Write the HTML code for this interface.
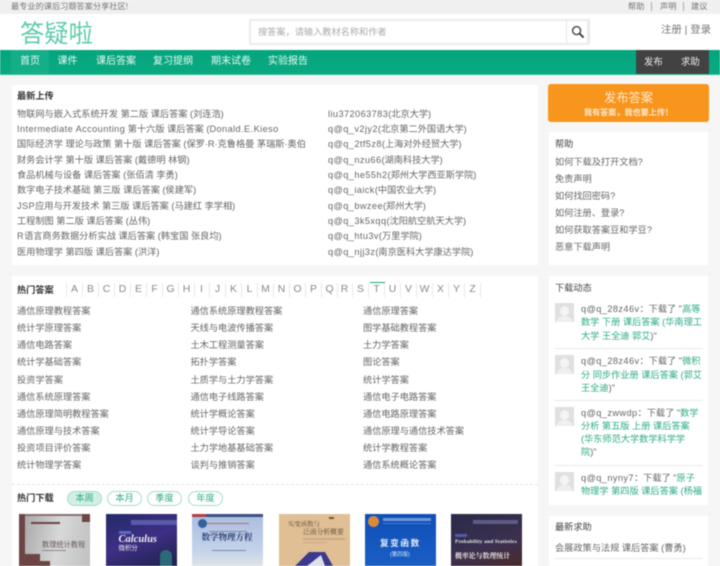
<!DOCTYPE html>
<html lang="zh"><head><meta charset="utf-8"><title>答疑啦</title>
<style>
html,body{margin:0;padding:0;width:720px;height:566px;overflow:hidden;background:#f6f6f6}
body{font-family:"Liberation Sans","Noto Sans CJK SC",sans-serif;font-size:9.2px;color:#666}
#w{position:absolute;left:0;top:0;width:720px;height:566px;overflow:hidden;filter:blur(.4px)}
#w div,#w span.a{position:absolute;white-space:nowrap}
.t{line-height:14px;height:14px}
.l{letter-spacing:.42px}
.b{color:#333;font-weight:bold}
.g{color:#2bab87}
.card{background:#fff}
.p{height:13px;top:491px;line-height:13px;border:1px solid #a5dcc9;border-radius:8px;color:#2bab87;text-align:center;font-size:9.2px;background:#fff}
.hr{height:1px;background:#eaeaea}
.av{width:19px;height:19px;background:#e0e0e0}
.av i{position:absolute;left:5px;top:3px;width:9px;height:10px;background:#f4f4f4;border-radius:50%}
.av b{position:absolute;left:2px;top:13px;width:15px;height:6px;background:#efefef;border-radius:6px 6px 0 0}
.L{top:283px;height:14px;line-height:14px;width:15px;text-align:center;font-size:10.4px;color:#888;border-right:1px solid #e8e8e8}
.bk{top:514px;height:52px;overflow:hidden}
</style></head><body><div id="w">

<div style="left:0;top:0;width:720px;height:14px;background:#f0f0f0"></div>
<div class="t" style="left:11px;top:0;font-size:8.2px;color:#777">最专业的课后习题答案分享社区!</div>
<div class="t" style="left:628px;top:0;font-size:8.2px;color:#777">帮助</div>
<div style="left:651px;top:2px;width:1px;height:9px;background:#aaa"></div>
<div class="t" style="left:660px;top:0;font-size:8.2px;color:#777">声明</div>
<div style="left:683px;top:2px;width:1px;height:9px;background:#aaa"></div>
<div class="t" style="left:691px;top:0;font-size:8.2px;color:#777">建议</div>

<div style="left:0;top:14px;width:720px;height:36px;background:#fff"></div>
<div style="left:20px;top:14px;font-size:24.3px;line-height:36px;color:#5fcbab;font-family:'Noto Sans CJK SC',sans-serif;font-weight:400">答疑啦</div>
<div style="left:249px;top:19px;width:336px;height:22px;border:2px solid #ececec;background:#fff"></div>
<div style="left:566px;top:20px;width:1px;height:23px;background:#e6e6e6"></div>
<div style="left:589px;top:19px;width:1px;height:25px;background:#e6e6e6"></div>
<div style="left:258px;top:25px;line-height:14px;color:#aaa">搜答案，请输入教材名称和作者</div>
<svg style="position:absolute;left:571px;top:25px" width="14" height="14" viewBox="0 0 14 14"><circle cx="5.6" cy="5.6" r="4" fill="none" stroke="#444" stroke-width="1.4"/><path d="M8.6 8.6L12 12" stroke="#444" stroke-width="2" stroke-linecap="round"/></svg>
<div style="left:661px;top:23px;line-height:16px;font-size:10.4px;color:#777">注册 | 登录</div>

<div style="left:0;top:50px;width:720px;height:24px;background:linear-gradient(180deg,#04a67d,#0aa983)"></div>
<div style="left:0;top:74px;width:720px;height:1px;background:#36bd9a"></div>
<div style="left:11px;top:50px;width:38px;height:24px;background:#14ae89"></div>
<div style="left:636px;top:50px;width:73px;height:24px;background:#424242"></div>
<div style="left:20px;top:50px;line-height:24px;font-size:10px;color:#e8f8f3">首页</div>
<div style="left:57.5px;top:50px;line-height:24px;font-size:10px;color:#e8f8f3">课件</div>
<div style="left:96px;top:50px;line-height:24px;font-size:10px;color:#e8f8f3">课后答案</div>
<div style="left:153px;top:50px;line-height:24px;font-size:10px;color:#e8f8f3">复习提纲</div>
<div style="left:211px;top:50px;line-height:24px;font-size:10px;color:#e8f8f3">期末试卷</div>
<div style="left:268px;top:50px;line-height:24px;font-size:10px;color:#e8f8f3">实验报告</div>
<div style="left:644px;top:50px;line-height:24px;font-size:9.4px;color:#eee">发布</div>
<div style="left:681px;top:50px;line-height:24px;font-size:9.4px;color:#eee">求助</div>

<!-- latest upload -->
<div class="card" style="left:12px;top:85px;width:526px;height:180px"></div>
<div class="t b" style="left:17px;top:89px">最新上传</div>
<div class="t" style="left:17px;top:107px">物联网与嵌入式系统开发 第二版 课后答案 (刘连浩)</div>
<div class="t" style="left:17px;top:122px"><span class="l">Intermediate Accounting</span> 第十六版 课后答案 (<span class="l">Donald.E.Kieso</span></div>
<div class="t" style="left:17px;top:137px">国际经济学 理论与政策 第十版 课后答案 (保罗·R·克鲁格曼 茅瑞斯·奥伯</div>
<div class="t" style="left:17px;top:153px">财务会计学 第十版 课后答案 (戴德明 林钢)</div>
<div class="t" style="left:17px;top:168px">食品机械与设备 课后答案 (张佰清 李勇)</div>
<div class="t" style="left:17px;top:183px">数字电子技术基础 第三版 课后答案 (侯建军)</div>
<div class="t" style="left:17px;top:199px"><span class="l">JSP</span>应用与开发技术 第三版 课后答案 (马建红 李学相)</div>
<div class="t" style="left:17px;top:214px">工程制图 第二版 课后答案 (丛伟)</div>
<div class="t" style="left:17px;top:229px"><span class="l">R</span>语言商务数据分析实战 课后答案 (韩宝国 张良均)</div>
<div class="t" style="left:17px;top:245px">医用物理学 第四版 课后答案 (洪洋)</div>

<div class="t" style="left:328px;top:107px"><span class="l">liu372063783</span>(北京大学)</div>
<div class="t" style="left:328px;top:122px"><span class="l">q@q_v2jy2</span>(北京第二外国语大学)</div>
<div class="t" style="left:328px;top:137px"><span class="l">q@q_2tf5z8</span>(上海对外经贸大学)</div>
<div class="t" style="left:328px;top:153px"><span class="l">q@q_nzu66</span>(湖南科技大学)</div>
<div class="t" style="left:328px;top:168px"><span class="l">q@q_he55h2</span>(郑州大学西亚斯学院)</div>
<div class="t" style="left:328px;top:183px"><span class="l">q@q_iaick</span>(中国农业大学)</div>
<div class="t" style="left:328px;top:199px"><span class="l">q@q_bwzee</span>(郑州大学)</div>
<div class="t" style="left:328px;top:214px"><span class="l">q@q_3k5xqq</span>(沈阳航空航天大学)</div>
<div class="t" style="left:328px;top:229px"><span class="l">q@q_htu3v</span>(万里学院)</div>
<div class="t" style="left:328px;top:245px"><span class="l">q@q_njj3z</span>(南京医科大学康达学院)</div>

<!-- hot answers -->
<div class="card" style="left:12px;top:276px;width:526px;height:290px"></div>
<div class="t b" style="left:17px;top:283px">热门答案</div>
<div style="left:66px;top:283px;width:1px;height:14px;background:#e8e8e8"></div>
<div class="L" style="left:67px">A</div><div class="L" style="left:83px">B</div><div class="L" style="left:99px">C</div><div class="L" style="left:115px">D</div><div class="L" style="left:131px">E</div><div class="L" style="left:147px">F</div><div class="L" style="left:163px">G</div><div class="L" style="left:179px">H</div><div class="L" style="left:194px">I</div><div class="L" style="left:210px">J</div><div class="L" style="left:226px">K</div><div class="L" style="left:242px">L</div><div class="L" style="left:258px">M</div><div class="L" style="left:274px">N</div><div class="L" style="left:290px">O</div><div class="L" style="left:306px">P</div><div class="L" style="left:322px">Q</div><div class="L" style="left:337px">R</div><div class="L" style="left:353px">S</div><div class="L" style="left:369px">T</div><div class="L" style="left:385px">U</div><div class="L" style="left:401px">V</div><div class="L" style="left:417px">W</div><div class="L" style="left:433px">X</div><div class="L" style="left:449px">Y</div><div class="L" style="left:465px">Z</div>
<div style="left:369.5px;top:281.5px;width:15.5px;height:1.5px;background:#12a983"></div>

<div class="t" style="left:17px;top:304px">通信原理教程答案</div><div class="t" style="left:190.5px;top:304px">通信系统原理教程答案</div><div class="t" style="left:363px;top:304px">通信原理答案</div>
<div class="t" style="left:17px;top:321px">统计学原理答案</div><div class="t" style="left:190.5px;top:321px">天线与电波传播答案</div><div class="t" style="left:363px;top:321px">图学基础教程答案</div>
<div class="t" style="left:17px;top:338px">通信电路答案</div><div class="t" style="left:190.5px;top:338px">土木工程测量答案</div><div class="t" style="left:363px;top:338px">土力学答案</div>
<div class="t" style="left:17px;top:355px">统计学基础答案</div><div class="t" style="left:190.5px;top:355px">拓扑学答案</div><div class="t" style="left:363px;top:355px">图论答案</div>
<div class="t" style="left:17px;top:373px">投资学答案</div><div class="t" style="left:190.5px;top:373px">土质学与土力学答案</div><div class="t" style="left:363px;top:373px">统计学答案</div>
<div class="t" style="left:17px;top:390px">通信系统原理答案</div><div class="t" style="left:190.5px;top:390px">通信电子线路答案</div><div class="t" style="left:363px;top:390px">通信电子电路答案</div>
<div class="t" style="left:17px;top:407px">通信原理简明教程答案</div><div class="t" style="left:190.5px;top:407px">统计学概论答案</div><div class="t" style="left:363px;top:407px">通信电路原理答案</div>
<div class="t" style="left:17px;top:424px">通信原理与技术答案</div><div class="t" style="left:190.5px;top:424px">统计学导论答案</div><div class="t" style="left:363px;top:424px">通信原理与通信技术答案</div>
<div class="t" style="left:17px;top:441px">投资项目评价答案</div><div class="t" style="left:190.5px;top:441px">土力学地基基础答案</div><div class="t" style="left:363px;top:441px">统计学教程答案</div>
<div class="t" style="left:17px;top:458px">统计物理学答案</div><div class="t" style="left:190.5px;top:458px">谈判与推销答案</div><div class="t" style="left:363px;top:458px">通信系统概论答案</div>

<div style="left:12px;top:484px;width:526px;border-top:1px dashed #e4e4e4"></div>
<div class="t b" style="left:17px;top:491px">热门下载</div>
<div class="p" style="left:67px;width:33px;background:#d2efe5">本周</div>
<div class="p" style="left:107px;width:33px">本月</div>
<div class="p" style="left:147px;width:33px">季度</div>
<div class="p" style="left:188px;width:33px">年度</div>

<!-- books -->
<div class="bk" style="left:19px;width:71px;background:linear-gradient(100deg,#a2a2a2,#d8d8d8 55%,#c0c0c0)">
  <div style="left:0;top:0;width:6px;height:52px;background:#6d4545"></div>
  <div style="left:6px;top:0;width:57px;height:2px;background:#8a7070"></div>
  <div style="left:12px;top:8px;width:29px;height:2px;background:#6d4545"></div>
  <div style="left:63px;top:0;width:8px;height:8px;background:#6d4545"></div>
  <div style="left:6px;top:40px;width:15px;height:12px;background:#6d4545"></div>
  <div style="left:21px;top:47px;width:10px;height:5px;background:#6d4545"></div>
  <div style="left:23px;top:26px;font-size:7.2px;line-height:10px;color:#6a5a5a">数理统计教程</div>
  <div style="left:23px;top:36px;width:24px;height:1px;background:#8a8a8a"></div>
</div>
<div class="bk" style="left:105.5px;width:71px;background:linear-gradient(160deg,#222a68,#3e2f86 50%,#1c2148)">
  <div style="left:25px;top:6px;width:46px;height:5px;background:#5a5aa8"></div>
  <div style="left:13px;top:17px;width:12px;height:3px;background:#5a6ac0"></div>
  <div style="left:13px;top:20px;font:italic bold 10.5px/12px 'Liberation Serif',serif;color:#eee">Calculus</div>
  <div style="left:13px;top:30px;font-size:6.4px;line-height:9px;color:#eee">微积分</div>
  <div style="left:54px;top:36px;width:12px;height:16px;background:#2a6a7a;border-radius:6px 6px 0 0"></div>
</div>
<div class="bk" style="left:191.5px;width:71px;background:linear-gradient(180deg,#a9bddf,#c4d3ea 70%,#dfe3e6)">
  <div style="left:0;top:0;width:71px;height:3px;background:#3c4f86"></div>
  <div style="left:0;top:0;width:14px;height:3px;background:#b83c48"></div>
  <div style="left:6px;top:5px;width:9px;height:9px;border-radius:50%;background:#35609e"></div>
  <div style="left:15px;top:9px;width:42px;height:1px;background:#c26a78"></div>
  <div style="left:17px;top:17px;width:38px;height:1px;background:#8a86a6"></div>
  <div style="left:10px;top:18px;font:bold 8.5px/11px 'Noto Serif CJK SC',serif;color:#273c6e">数学物理方程</div>
  <div style="left:20px;top:36px;width:34px;height:1px;background:#7c8aae"></div>
</div>
<div class="bk" style="left:278.5px;width:71px;background:#e0bf95">
  <div style="left:9.5px;top:4.5px;font:6.4px/9px 'Noto Serif CJK SC',serif;color:#5f4f3c">实变函数与</div>
  <div style="left:24.5px;top:12.5px;font:6.8px/9px 'Noto Serif CJK SC',serif;color:#5f4f3c">泛函分析概要</div>
  <div style="left:50px;top:3px;width:5px;height:2px;background:#6b5a45"></div>
  <div style="left:24px;top:24px;width:42px;height:2px;background:#cda981"></div>
  <div style="left:24px;top:28px;width:24px;height:1px;background:#cda981"></div>
  <svg style="position:absolute;left:16px;top:38px" width="40" height="14" viewBox="0 0 40 14"><path d="M0 14L14 0H30L38 14Z" fill="#3b3a8e"/><path d="M12 14L26 3L30 14Z" fill="#dfe0ee"/></svg>
</div>
<div class="bk" style="left:365px;width:71px;background:linear-gradient(180deg,#0f4fb8,#1a5ec4)">
  <div style="left:3px;top:2px;width:11px;height:11px;border-radius:50%;background:#d98a3c"></div>
  <div style="left:18px;top:4px;width:48px;height:3px;background:#6f97d8"></div>
  <div style="left:18px;top:9px;width:48px;height:1px;background:#4a7cd0"></div>
  <div style="left:15px;top:24px;font:bold 8.6px/11px 'Noto Sans CJK SC',sans-serif;color:#e4ecf8;letter-spacing:1.6px">复变函数</div>
  <div style="left:25px;top:37px;font-size:5.4px;line-height:8px;color:#dce6f6">(第四版)</div>
</div>
<div class="bk" style="left:451px;width:71px;background:linear-gradient(160deg,#2a2a48,#3c3050 60%,#4a2a2a)">
  <div style="left:22px;top:6px;width:45px;height:4px;background:#5c5c86"></div>
  <div style="left:4px;top:20px;width:12px;height:3px;background:#5458a8"></div>
  <div style="left:4px;top:24px;font:bold 5.4px/8px 'Liberation Serif',serif;color:#e8e8e8;letter-spacing:.15px">Probability and Statistics</div>
  <div style="left:4px;top:36px;font:bold 6.9px/10px 'Noto Serif CJK SC',serif;color:#ece6df">概率论与数理统计</div>
</div>

<!-- right -->
<div style="left:548px;top:84px;width:161px;height:38px;background:#f8951d;border-radius:3px"></div>
<div style="left:548px;top:88.5px;width:161px;text-align:center;line-height:18px;font-size:12.3px;color:#fde9cf">发布答案</div>
<div style="left:548px;top:105.5px;width:161px;text-align:center;line-height:13px;font-size:8.1px;color:#fde9cf;font-weight:bold">我有答案，我也要上传！</div>

<div class="card" style="left:549px;top:132px;width:159px;height:133px"></div>
<div class="t b" style="left:555px;top:137px;font-weight:normal;color:#444">帮助</div>
<div class="t" style="left:555px;top:155px">如何下载及打开文档?</div>
<div class="t" style="left:555px;top:172px">免责声明</div>
<div class="t" style="left:555px;top:189px">如何找回密码?</div>
<div class="t" style="left:555px;top:206px">如何注册、登录?</div>
<div class="t" style="left:555px;top:223px">如何获取答案豆和学豆?</div>
<div class="t" style="left:555px;top:240px">恶意下载声明</div>

<div class="card" style="left:549px;top:276px;width:159px;height:229px"></div>
<div class="t" style="left:555px;top:281px;color:#444">下载动态</div>

<div class="av" style="left:555px;top:303px"><i></i><b></b></div>
<div class="t" style="left:581px;top:302px"><span class="l">q@q_28z46v</span>：下载了 "<span class="g">高等</span></div>
<div class="t g" style="left:581px;top:315px">数学 下册 课后答案 (华南理工</div>
<div class="t" style="left:581px;top:329px"><span class="g">大学 王全迪 郭艾</span>)"</div>
<div class="hr" style="left:555px;top:348px;width:148px"></div>

<div class="av" style="left:555px;top:355px"><i></i><b></b></div>
<div class="t" style="left:581px;top:354px"><span class="l">q@q_28z46v</span>：下载了 "<span class="g">微积</span></div>
<div class="t g" style="left:581px;top:368px">分 同步作业册 课后答案 (郭艾</div>
<div class="t" style="left:581px;top:381px"><span class="g">王全迪</span>)"</div>
<div class="hr" style="left:555px;top:400px;width:148px"></div>

<div class="av" style="left:555px;top:407px"><i></i><b></b></div>
<div class="t" style="left:581px;top:406px"><span class="l">q@q_zwwdp</span>：下载了 "<span class="g">数学</span></div>
<div class="t g" style="left:581px;top:419px">分析 第五版 上册 课后答案</div>
<div class="t g" style="left:581px;top:432px">(华东师范大学数学科学学</div>
<div class="t" style="left:581px;top:445px"><span class="g">院</span>)"</div>
<div class="hr" style="left:555px;top:465px;width:148px"></div>

<div class="av" style="left:555px;top:472px"><i></i><b></b></div>
<div class="t" style="left:581px;top:471px"><span class="l">q@q_nyny7</span>：下载了 "<span class="g">原子</span></div>
<div class="t g" style="left:581px;top:484px">物理学 第四版 课后答案 (杨福</div>

<div class="card" style="left:549px;top:516px;width:159px;height:50px"></div>
<div class="t" style="left:555px;top:520px;color:#444">最新求助</div>
<div class="t" style="left:555px;top:541px">会展政策与法规 课后答案 (曹勇)</div>
<div class="hr" style="left:555px;top:558px;width:148px"></div>

</div></body></html>
